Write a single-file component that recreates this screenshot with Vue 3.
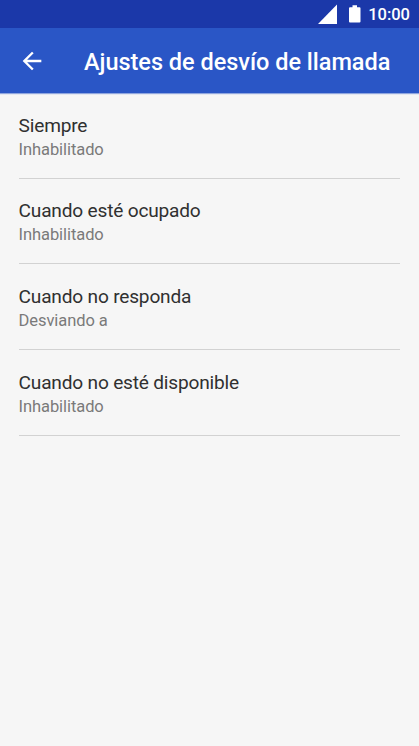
<script setup>
import { ref } from 'vue'

const options = ref([
  { id: 1, name: 'Siempre', status: 'Inhabilitado' },
  { id: 2, name: 'Cuando esté ocupado', status: 'Inhabilitado' },
  { id: 3, name: 'Cuando no responda', status: 'Desviando a' },
  { id: 4, name: 'Cuando no esté disponible', status: 'Inhabilitado' },
])
</script>
<template>
  <div class="screen">
    <div class="statusBar">
      <svg class="signal" width="19" height="20" viewBox="0 0 19 20">
        <path d="M19 0.500V20H0Z" fill="#fff" />
      </svg>
      <svg class="battery" width="12" height="18" viewBox="0 0 12 18">
        <path d="M3.500 0.300h4.500v1.900h2.500a1 1 0 0 1 1 1v13.300a1 1 0 0 1-1 1H1a1 1 0 0 1-1-1V3.200a1 1 0 0 1 1-1h2.500z" fill="#fff" />
      </svg>
      <div class="clock">10:00</div>
    </div>
    <header class="appBar">
      <button class="back" aria-label="Atrás">
        <svg width="28" height="28" viewBox="0 0 24 24">
          <path d="M20 11H7.830l5.590-5.590L12 4l-8 8 8 8 1.410-1.410L7.830 13H20v-2z" fill="#fff" />
        </svg>
      </button>
      <h1 class="title">Ajustes de desvío de llamada</h1>
    </header>
    <main class="options">
      <div v-for="item in options" :key="item.id" class="option">
        <div class="name">{{ item.name }}</div>
        <div class="status">{{ item.status }}</div>
      </div>
    </main>
  </div>
</template>
<style>
body {
  margin: 0;
}
</style>
<style scoped>
.screen {
  height: 746px;
  overflow: hidden;
  background: #f6f6f6;
  font-family: Roboto, 'Liberation Sans', sans-serif;
}
.statusBar {
  display: flex;
  align-items: flex-start;
  justify-content: flex-end;
  height: 28px;
  padding-right: 9px;
  box-sizing: border-box;
  background: #1b38a9;
}
.signal {
  margin-top: 4px;
}
.battery {
  margin: 5px 7px 0 12px;
}
.clock {
  color: #fff;
  font-size: 16.500px;
  font-weight: 500;
  line-height: 30px;
}
.appBar {
  display: flex;
  align-items: center;
  height: 65px;
  background: #2a56c6;
  box-shadow: 0 1px 1px rgba(42, 86, 198, 0.5);
}
.back {
  display: flex;
  margin-left: 18px;
  padding: 0;
  border: 0;
  background: none;
}
.title {
  margin: 2px 0 0 38px;
  color: #fff;
  font-size: 23.500px;
  font-weight: 500;
  letter-spacing: -0.020px;
  white-space: nowrap;
}
.options {
  padding: 0 19px 0 18.600px;
}
.option {
  height: 85.670px;
  padding-top: 20.700px;
  box-sizing: border-box;
  border-bottom: 1px solid #d2d2d2;
}
.name {
  color: #303030;
  font-size: 19.100px;
  letter-spacing: -0.190px;
  line-height: 23px;
}
.status {
  color: #7a7a7a;
  font-size: 16.500px;
  letter-spacing: -0.080px;
  line-height: 26px;
}
</style>
